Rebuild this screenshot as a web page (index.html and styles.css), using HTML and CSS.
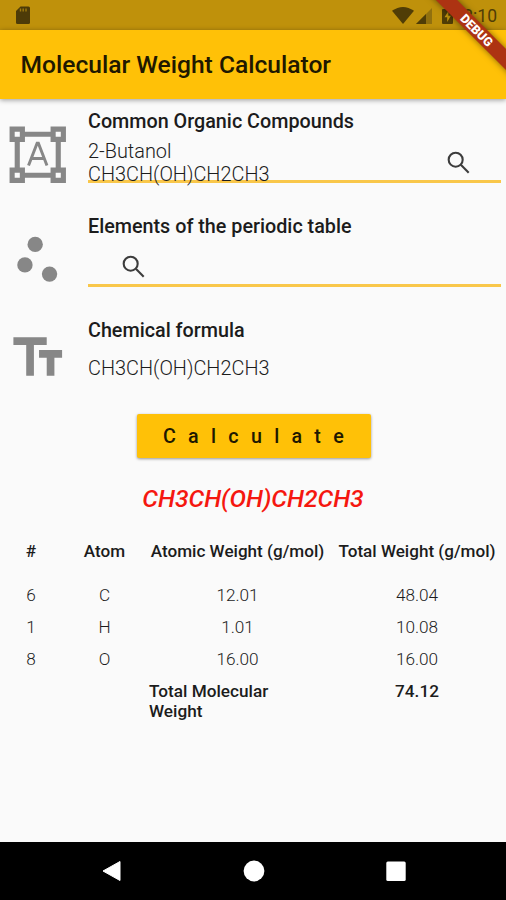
FILE: index.html
```html
<!DOCTYPE html>
<html lang="en">
<head>
<meta charset="utf-8">
<title>Molecular Weight Calculator</title>
<link rel="stylesheet" href="styles.css">
</head>
<body>
<div class="screen">
  <div class="statusbar">
    <svg class="sd" viewBox="0 0 14 18"><path d="M4.500 .5H12.500Q14 .5 14 2V16.500Q14 18 12.500 18H1.500Q0 18 0 16.500V5z" fill="#4d3b08"/><path d="M4.500 2.500v3M7.200 2.500v3M10 2.500v3" stroke="#a17c0e" stroke-width="1.400"/></svg>
    <div class="indicators">
      <svg class="wifi" viewBox="0 0 22 17"><path d="M0 3.800Q11-3.800 22 3.800L11 17z" fill="#503d06"/></svg>
      <svg class="signal" viewBox="0 0 16 16"><path d="M16 0V16H0z" fill="#91700e"/><path d="M10 6V16H0z" fill="#503d06"/></svg>
      <svg class="battery" viewBox="0 0 11 17"><path d="M3 0h5v2h2q1 0 1 1v13q0 1-1 1H1q-1 0-1-1V3q0-1 1-1h2z" fill="#503d06"/><path d="M6.500 4L2.500 10.300h2.700V15l3.700-6.300H6.300z" fill="#c4960d"/></svg>
      <span class="clock">8:10</span>
    </div>
  </div>
  <header class="appbar"><h1>Molecular Weight Calculator</h1></header>
  <div class="ribbon-clip"><div class="ribbon"><span>DEBUG</span></div></div>

  <main>
    <section class="field">
      <svg class="lead" viewBox="0 0 24 24"><path d="M23 7V1h-6v2H7V1H1v6h2v10H1v6h6v-2h10v2h6v-6h-2V7h2zM3 3h2v2H3V3zm2 18H3v-2h2v2zm12-2H7v-2H5V7h2V5h10v2h2v10h-2v2zm4 2h-2v-2h2v2zM19 5V3h2v2h-2z"/><path d="M8.400 16.200L11.750 7.500h.5L15.600 16.200M9.600 13.500h4.800" fill="none" stroke="#878787" stroke-width="1.150"/></svg>
      <div class="content">
        <h2>Common Organic Compounds</h2>
        <div class="select wide">
          <div class="value"><div class="name">2-Butanol</div><div class="formula">CH3CH(OH)CH2CH3</div></div>
          <svg class="search" viewBox="0 0 24 24"><circle cx="9.500" cy="9.500" r="5.700"/><path d="M13.700 13.700L20.100 20.100"/></svg>
        </div>
      </div>
    </section>
    <section class="field">
      <svg class="lead" viewBox="0 0 24 24"><circle cx="7" cy="14" r="3"/><circle cx="11" cy="6" r="3"/><circle cx="16.600" cy="17.600" r="3"/></svg>
      <div class="content">
        <h2>Elements of the periodic table</h2>
        <div class="select">
          <svg class="search" viewBox="0 0 24 24"><circle cx="9.500" cy="9.500" r="5.700"/><path d="M13.700 13.700L20.100 20.100"/></svg>
        </div>
      </div>
    </section>
    <section class="field last">
      <svg class="lead" viewBox="0 0 24 24"><path d="M2.500 4v3h5v12h3V7h5V4h-13zm19 5h-9v3h3v7h3v-7h3V9z"/></svg>
      <div class="content">
        <h2>Chemical formula</h2>
        <div class="plain formula">CH3CH(OH)CH2CH3</div>
      </div>
    </section>

    <button class="calculate">Calculate</button>
    <div class="result">CH3CH(OH)CH2CH3</div>

    <div class="table">
      <div class="row head"><span>#</span><span>Atom</span><span>Atomic Weight (g/mol)</span><span>Total Weight (g/mol)</span></div>
      <div class="row"><span>6</span><span>C</span><span>12.01</span><span>48.04</span></div>
      <div class="row"><span>1</span><span>H</span><span>1.01</span><span>10.08</span></div>
      <div class="row"><span>8</span><span>O</span><span>16.00</span><span>16.00</span></div>
      <div class="row total"><span></span><span></span><span class="label">Total Molecular Weight</span><span>74.12</span></div>
    </div>
  </main>

  <nav class="navbar">
    <svg viewBox="0 0 22 22"><path d="M19 1.500V20.500L2 11z" fill="#fff" stroke="#fff" stroke-linejoin="round"/></svg>
    <svg viewBox="0 0 22 22"><circle cx="11" cy="11" r="10.400" fill="#fff"/></svg>
    <svg viewBox="0 0 22 22"><rect x="1.300" y="1.500" width="19.400" height="19.400" rx="1.500" fill="#fff"/></svg>
  </nav>
</div>
</body>
</html>
```

FILE: styles.css
```css
* { box-sizing: border-box; }
body { margin: 0; font-family: Roboto, sans-serif; color: #1c1c1c; background: #fafafa; }
h1, h2 { margin: 0; font-weight: 500; white-space: nowrap; }
.screen { position: relative; width: 506px; height: 900px; display: flex; flex-direction: column; overflow: hidden; }

.statusbar { height: 30px; flex: none; background: #bf910b; display: flex; justify-content: space-between; align-items: flex-start; padding: 6px 9px 0 16px; }
.sd { width: 14px; height: 18px; }
.indicators { display: flex; align-items: flex-start; }
.wifi { width: 22px; height: 17px; margin-top: 1px; }
.signal { width: 16px; height: 16px; margin: 2px 0 0 2px; }
.battery { width: 11px; height: 17px; margin: 1px 0 0 10px; }
.clock { font-size: 17.500px; line-height: 20px; margin-left: 10px; color: #503d06; }

.appbar { height: 69px; flex: none; background: #ffc107; display: flex; align-items: center; padding: 1px 0 0 20.500px; box-shadow: 0 1px 5px rgba(0,0,0,.4); }
.appbar h1 { font-size: 24.600px; line-height: 30px; color: #201800; }

.ribbon-clip { position: absolute; top: 0; right: 0; width: 90px; height: 90px; overflow: hidden; }
.ribbon { position: absolute; top: 22px; left: -2px; width: 124px; height: 15px; background: #ad3312; transform: rotate(45deg); box-shadow: 0 0 6px rgba(0,0,0,.5); text-align: center; }
.ribbon span { display: block; color: #fff; font-size: 12.500px; font-weight: 900; line-height: 15px; padding-left: 2px; }

main { flex: 1; display: flex; flex-direction: column; padding-top: 9px; }
.field { height: 104.600px; flex: none; display: flex; padding-right: 5px; }
.lead { width: 61.500px; height: 61.500px; margin: 16px 19.500px 0 7px; fill: #878787; flex: none; }
.last .lead { margin-top: 10px; }
.content { flex: 1; }
.content h2 { font-size: 19.750px; line-height: 28px; height: 26px; }
.select { height: 48.500px; border-bottom: 3px solid #f9c74a; padding-left: 30.500px; display: flex; align-items: flex-start; }
.wide { padding: 0 28px 0 0; justify-content: space-between; }
.select .search { width: 29.500px; height: 29.500px; margin-top: 13.500px; fill: none; stroke: #3c3c3c; stroke-width: 1.700; }
.name, .formula { font-size: 19.900px; line-height: 23px; font-weight: 300; white-space: nowrap; }
.value { height: 50px; padding-top: 6px; }
.plain { padding-top: 14px; }

.calculate { align-self: center; flex: none; margin: -8px 0 0 1px; width: 234px; height: 44px; border: 0; border-radius: 2px; background: #ffc107; box-shadow: 0 1px 3px rgba(0,0,0,.4); font: 500 19.700px/44px Roboto, sans-serif; letter-spacing: 12.300px; padding: 1px 0 0 12px; color: #201800; }
.result { text-align: center; margin-top: 26px; font-size: 24.700px; line-height: 30px; font-weight: 500; font-style: italic; color: #f5170f; }

.table { margin-top: 21px; font-size: 17.200px; line-height: 20px; }
.row { display: grid; grid-template-columns: 62px 85px 181px 178px; height: 32px; align-items: start; text-align: center; font-weight: 300; padding-top: 6px; }
.head { font-weight: 500; height: 44px; white-space: nowrap; font-size: 17.100px; }
.total { font-weight: 500; }
.total .label { text-align: left; padding: 0 50px 0 2px; }

.navbar { height: 58px; flex: none; background: #000; display: flex; justify-content: space-between; padding: 18px 99px 0 101px; }
.navbar svg { width: 22px; height: 22px; }
```
